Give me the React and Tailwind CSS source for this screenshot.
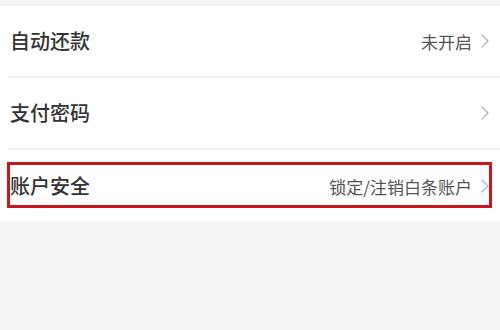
import React from 'react';

const font = { fontFamily: '"Noto Sans CJK SC", "Noto Sans", sans-serif' };

const Chevron = () => (
  <svg width="8" height="14" viewBox="0 0 8 14" fill="none" className="shrink-0">
    <polyline points="1,1 7,7 1,13" stroke="#b3b3b3" strokeWidth="1.3" strokeLinecap="round" strokeLinejoin="round" />
  </svg>
);

const Row = ({ label, value, divider = true, highlight = false }) => (
  <div className="relative pl-[8px]">
    <div
      className={`h-[72px] flex items-center justify-between pr-[11px] ${
        divider ? 'border-b-[2px] border-[#f0f0f0]' : ''
      }`}
    >
      <span className="text-[20px] leading-none font-medium text-[#333333] pl-[2px]">{label}</span>
      <div className="flex items-center gap-[9px]">
        {value && <span className="text-[17px] leading-none text-[#555555]">{value}</span>}
        <Chevron />
      </div>
    </div>
    {highlight && (
      <div className="absolute left-[7px] top-[12px] w-[485px] h-[46px] border-[3px] border-[#c8161d] pointer-events-none" />
    )}
  </div>
);

export default function App() {
  const items = [
    { label: '自动还款', value: '未开启' },
    { label: '支付密码', value: '' },
    { label: '账户安全', value: '锁定/注销白条账户', highlight: true },
  ];

  return (
    <div className="w-[500px] h-[330px] bg-[#f4f4f6] overflow-hidden" style={font}>
      <div className="h-[6px] bg-[#f3f3f3]" />
      <div className="bg-white">
        {items.map((item, i) => (
          <Row
            key={item.label}
            label={item.label}
            value={item.value}
            highlight={item.highlight}
            divider={i < items.length - 1}
          />
        ))}
      </div>
    </div>
  );
}
